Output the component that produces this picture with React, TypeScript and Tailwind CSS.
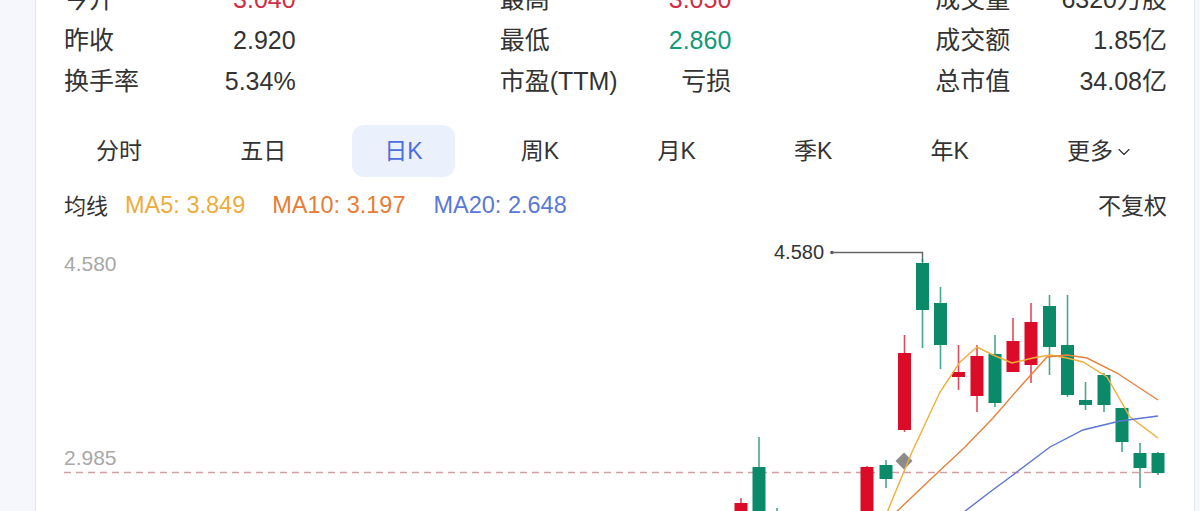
import { ChevronDown } from "lucide-react";

type Stat = { label: string; value: string; tone?: "up" | "down" };

const stats: Stat[][] = [
  [
    { label: "今开", value: "3.040", tone: "up" },
    { label: "最高", value: "3.050", tone: "up" },
    { label: "成交量", value: "6320万股" },
  ],
  [
    { label: "昨收", value: "2.920" },
    { label: "最低", value: "2.860", tone: "down" },
    { label: "成交额", value: "1.85亿" },
  ],
  [
    { label: "换手率", value: "5.34%" },
    { label: "市盈(TTM)", value: "亏损" },
    { label: "总市值", value: "34.08亿" },
  ],
];

const tabs = ["分时", "五日", "日K", "周K", "月K", "季K", "年K"];

// [cx, wickTop, bodyTop, bodyBottom, wickBottom, up]
const candles: [number, number, number, number, number, boolean][] = [
  [741, 498, 503, 540, 540, true],
  [759, 437, 467, 540, 540, false],
  [777, 508, 516, 540, 540, false],
  [867, 466, 467, 540, 540, true],
  [886, 460, 465, 479, 488, false],
  [904.5, 335, 353, 430, 432, true],
  [922.5, 259, 263, 310, 348, false],
  [940.5, 287, 303, 345, 369, false],
  [958.5, 345, 372, 377, 390, true],
  [977, 345, 356, 396, 412, true],
  [995, 335, 354, 403, 407, false],
  [1013, 318, 341, 372, 372, true],
  [1031, 303, 322, 365, 383, true],
  [1049.5, 295, 306, 347, 375, false],
  [1067.5, 295, 345, 395, 397, false],
  [1085.5, 382, 400, 405, 410, false],
  [1104, 373, 375, 405, 412, false],
  [1122, 408, 408, 442, 452, false],
  [1140, 443, 453, 468, 488, false],
  [1158, 452, 453, 473, 475, false],
];

const ma5 = "886,515 912,452 940,392 960,362 977,347 993,355 1012,363 1033,358 1050,355 1067,358 1083,362 1107,377 1130,417 1158,438";
const ma10 = "893,515 933,477 965,447 993,418 1020,387 1047,357 1067,355 1087,358 1117,373 1158,400";
const ma20 = "960,515 990,492 1013,475 1050,447 1083,430 1120,421 1158,416";

function Chart() {
  return (
    <svg width={1103} height={291} className="block overflow-hidden">
      <g transform="translate(-64,-220)">
        <text x={64} y={271} fontSize={21} fill="#a8a8a8" fontFamily="Liberation Sans, sans-serif">
          4.580
        </text>
        <text x={64} y={465} fontSize={21} fill="#a8a8a8" fontFamily="Liberation Sans, sans-serif">
          2.985
        </text>
        <line x1={64} y1={472.5} x2={1166} y2={472.5} stroke="#d69ca3" strokeWidth={1.3} strokeDasharray="7 5" />

        <text x={774} y={259} fontSize={20} fill="#333" fontFamily="Liberation Sans, sans-serif">
          4.580
        </text>
        <circle cx={832} cy={252.5} r={1.8} fill="#555" />
        <polyline points="832,252.5 922.5,252.5 922.5,262" fill="none" stroke="#666" strokeWidth={1.4} />

        {candles.map(([cx, wt, bt, bb, wb, up], i) => {
          const c = up ? "#dc0b27" : "#0b8a6a";
          return (
            <g key={i}>
              <line x1={cx} y1={wt} x2={cx} y2={wb} stroke={c} strokeWidth={1.6} opacity={0.75} />
              <rect x={cx - 6.5} y={bt} width={13} height={Math.max(bb - bt, 2)} fill={c} />
            </g>
          );
        })}

        <rect x={898} y={455} width={12} height={12} fill="#8b8b8b" transform="rotate(45 904 461)" />

        <polyline points={ma5} fill="none" stroke="#f0ae3a" strokeWidth={1.4} />
        <polyline points={ma10} fill="none" stroke="#e9813d" strokeWidth={1.4} />
        <polyline points={ma20} fill="none" stroke="#5b75d6" strokeWidth={1.4} />
      </g>
    </svg>
  );
}

export default function App() {
  return (
    <div className="flex h-[511px] overflow-hidden bg-[#f5f7fc] font-['Liberation_Sans','Noto_Sans_CJK_SC',sans-serif] text-[#333]">
      <div className="w-[35px] shrink-0" />
      <div className="w-[1160px] shrink-0 border-x border-[#e3e6ec] bg-white pl-[28px] pr-[27px]">
        <div className="-mt-[21px]">
          {stats.map((row, r) => (
            <div key={r} className="grid h-[41px] grid-cols-3 gap-x-[204px] text-[25px] leading-[41px]">
              {row.map((s) => (
                <div key={s.label} className="flex justify-between">
                  <span>{s.label}</span>
                  <span
                    className={
                      s.tone === "up" ? "text-[#d12d45]" : s.tone === "down" ? "text-[#129a7a]" : "text-[#333]"
                    }
                  >
                    {s.value}
                  </span>
                </div>
              ))}
            </div>
          ))}
        </div>

        <div className="mt-[23px] flex justify-between text-[23px]">
          {tabs.map((t) => (
            <div
              key={t}
              className={
                t === "日K"
                  ? "flex h-[52px] items-center rounded-[12px] bg-[#eaf1fd] px-[32px] text-[#4b6ee0]"
                  : "flex h-[52px] items-center rounded-[12px] px-[32px]"
              }
            >
              {t}
            </div>
          ))}
          <div className="flex h-[52px] items-center pl-[32px] pr-[33px]">
            更多
            <ChevronDown size={20} strokeWidth={1.4} className="ml-[1px] mt-[2px]" />
          </div>
        </div>

        <div className="mt-[15px] flex h-[28px] items-center text-[23.5px]">
          <span className="text-[22px]">均线</span>
          <span className="ml-[17px] text-[#eeab3c]">MA5: 3.849</span>
          <span className="ml-[27px] text-[#e77c36]">MA10: 3.197</span>
          <span className="ml-[28px] text-[#5b78d6]">MA20: 2.648</span>
          <span className="ml-auto text-[23px]">不复权</span>
        </div>

        <Chart />
      </div>
      <div className="flex-1" />
    </div>
  );
}
